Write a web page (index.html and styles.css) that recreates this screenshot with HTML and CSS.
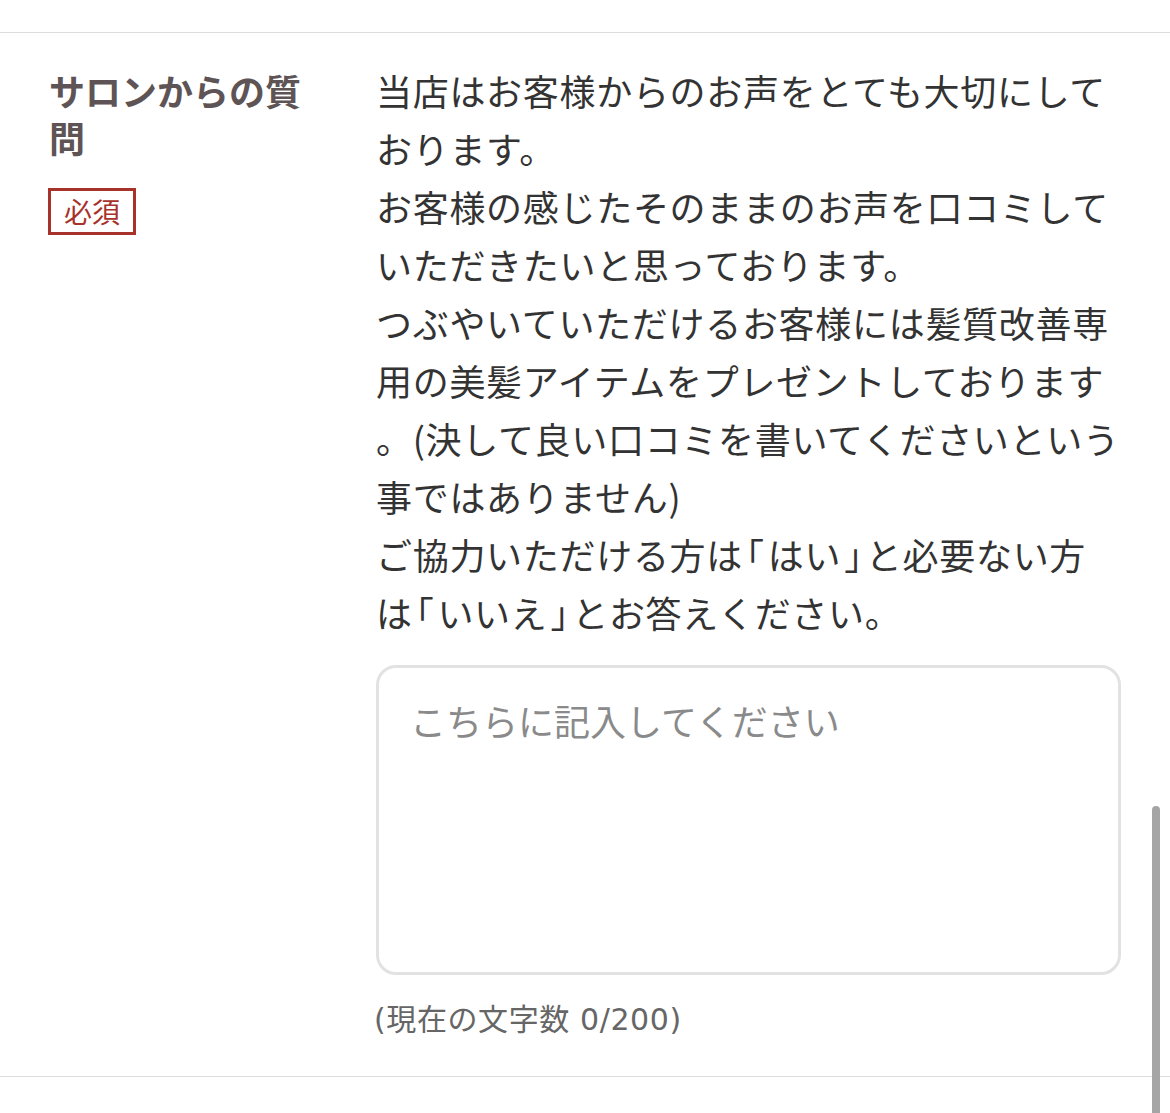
FILE: index.html
```html
<!DOCTYPE html>
<html lang="ja">
<head>
  <meta charset="UTF-8" />
  <meta name="viewport" content="width=device-width, initial-scale=1" />
  <title>サロンからの質問</title>
  <link rel="stylesheet" href="styles.css">
</head>
<body>
  <!-- Question row -->
  <div class="form-row">
    <div class="row-head">
      <p class="row-label">サロンからの質<br>問</p>
      <span class="required">必須</span>
    </div>

    <div class="row-body">
      <p class="question">
        <span class="line">当店はお客様からのお声をとても大切にして</span>
        <span class="line">おります。</span>
        <span class="line">お客様の感じたそのままのお声を口コミして</span>
        <span class="line">いただきたいと思っております。</span>
        <span class="line">つぶやいていただけるお客様には髪質改善専</span>
        <span class="line">用の美髪アイテムをプレゼントしております</span>
        <span class="line">。(決して良い口コミを書いてくださいという</span>
        <span class="line">事ではありません)</span>
        <span class="line">ご協力いただける方は<span class="half">「</span>はい<span class="half">」</span>と必要ない方</span>
        <span class="line">は<span class="half">「</span>いいえ<span class="half">」</span>とお答えください。</span>
      </p>

      <textarea class="answer" placeholder="こちらに記入してください"></textarea>
      <p class="counter">(現在の文字数 0/200)</p>
    </div>
  </div>

  <div class="scrollbar"></div>
</body>
</html>
```

FILE: styles.css
```css
* {
  box-sizing: border-box;
  margin: 0;
  padding: 0;
}

body {
  background: #fff;
  font-family: "Noto Sans CJK JP", "Noto Sans", sans-serif;
  color: #333;
  height: 1113px;
  overflow: hidden;
}

.form-row {
  margin-top: 32px;
  border-top: 1px solid #dddddd;
  border-bottom: 1px solid #dddddd;
  display: grid;
  grid-template-columns: 326px 744px;
  padding: 28px 50px 34px 50px;
}

.row-head {
  padding-top: 6px;
}

.row-label {
  font-size: 36px;
  line-height: 47px;
  font-weight: 700;
  color: #5e5456;
  margin-left: -1px;
}

.required {
  display: inline-block;
  margin-top: 27px;
  margin-left: -2px;
  border: 3px solid #a6322a;
  color: #a6322a;
  font-size: 28px;
  line-height: 41px;
  padding: 0 13px;
  height: 47px;
}

.question {
  font-size: 36px;
  line-height: 58px;
  letter-spacing: 0.7px;
  color: #333;
}

.question .line {
  display: block;
  white-space: nowrap;
}

.question .half {
  font-feature-settings: "halt";
  padding: 0 3px;
}

.answer {
  display: block;
  width: 745px;
  height: 310px;
  margin-top: 24px;
  border: 3px solid #e2e2e2;
  border-radius: 20px;
  padding: 27px 31px;
  font-family: inherit;
  font-size: 36px;
  line-height: 50px;
  color: #333;
  resize: none;
  outline: none;
}

.answer::placeholder {
  color: #8a8a8a;
}

.counter {
  margin-top: 22px;
  font-family: "DejaVu Sans", "Noto Sans CJK JP", sans-serif;
  font-size: 30px;
  line-height: 45px;
  letter-spacing: 0.6px;
  color: #666;
  margin-left: -2px;
}

.scrollbar {
  position: fixed;
  right: 10px;
  top: 806px;
  width: 8px;
  height: 320px;
  border-radius: 4px;
  background: #a5a5a5;
}
```
